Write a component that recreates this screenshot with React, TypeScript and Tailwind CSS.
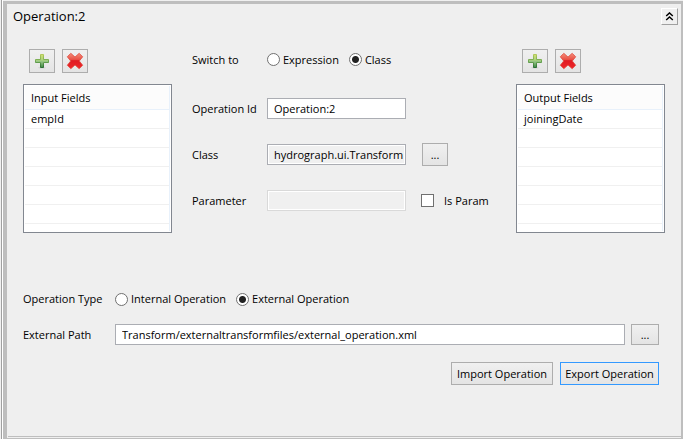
import React from "react";

function PlusIcon() {
  return (
    <svg width="16" height="16" viewBox="0 0 16 16" aria-hidden="true">
      <defs>
        <linearGradient id="plusFill" x1="0" y1="0" x2="0" y2="1">
          <stop offset="0" stopColor="#cfe070" />
          <stop offset="0.4" stopColor="#b0d47c" />
          <stop offset="0.55" stopColor="#93c383" />
          <stop offset="1" stopColor="#3f8a45" />
        </linearGradient>
        <linearGradient id="plusEdge" x1="0" y1="0" x2="0" y2="1">
          <stop offset="0" stopColor="#b3c95c" />
          <stop offset="0.5" stopColor="#6fa953" />
          <stop offset="1" stopColor="#2c6e35" />
        </linearGradient>
      </defs>
      <ellipse cx="8" cy="14.8" rx="4" ry="0.8" fill="#d2d2d2" />
      <path d="M6.5 1.5h3v5h5v3h-5v5h-3v-5h-5v-3h5z" fill="url(#plusFill)" stroke="url(#plusEdge)" strokeWidth="1" strokeLinejoin="round" />
    </svg>
  );
}

function CrossIcon() {
  return (
    <svg width="18" height="18" viewBox="0 0 18 18" aria-hidden="true">
      <defs>
        <linearGradient id="crossFill" x1="0" y1="0" x2="0" y2="1">
          <stop offset="0" stopColor="#f4907a" />
          <stop offset="0.4" stopColor="#ea5146" />
          <stop offset="0.48" stopColor="#e01b22" />
          <stop offset="1" stopColor="#ee2629" />
        </linearGradient>
      </defs>
      <path
        d="M4.8 1.3 9 5.1 13.2 1.3 16.7 4.8 13.3 9 16.7 13.2 13.2 16.7 9 13 4.8 16.7 1.3 13.2 4.7 9 1.3 4.8z"
        fill="url(#crossFill)"
        stroke="#e0493f"
        strokeWidth="0.8"
        strokeLinejoin="round"
      />
    </svg>
  );
}

const face = "border border-[#adadad] bg-linear-to-b from-[#f0f0f0] to-[#e4e4e4]";

function IconButton({ label, children }: { label: string; children: React.ReactNode }) {
  return (
    <button aria-label={label} className={`flex h-6 w-[26px] items-center justify-center ${face}`}>
      {children}
    </button>
  );
}

function FieldTable({ title, value }: { title: string; value: string }) {
  return (
    <div className="w-[149px] shrink-0">
      <div className="flex gap-[7px] pl-1.5">
        <IconButton label={`Add ${title}`}>
          <PlusIcon />
        </IconButton>
        <IconButton label={`Delete ${title}`}>
          <CrossIcon />
        </IconButton>
      </div>
      <div className="mt-[11px] h-[149px] border border-[#828790] bg-white p-px">
        <div className="h-full border-r border-[#e8f1fb]">
          <table className="w-full table-fixed border-separate border-spacing-0">
            <thead>
              <tr className="bg-[#fcfcfc]">
                <th className="h-6 border-b border-[#e8f1fb] p-0 pl-1.5 text-left font-normal">{title}</th>
              </tr>
            </thead>
            <tbody>
              {[value, "", "", "", "", ""].map((text, i) => (
                <tr key={i}>
                  <td className="h-[19px] border-b border-[#f0f0f0] p-0 pl-1.5">{text}</td>
                </tr>
              ))}
            </tbody>
          </table>
        </div>
      </div>
    </div>
  );
}

function Radio({ name, label, checked }: { name: string; label: string; checked?: boolean }) {
  return (
    <label className="flex items-center gap-[3px]">
      <input
        type="radio"
        name={name}
        defaultChecked={checked}
        className="size-[13px] appearance-none rounded-full border border-[#707070] bg-white checked:bg-[radial-gradient(circle,#222_0_3px,#fff_4px)]"
      />
      {label}
    </label>
  );
}

export default function App() {
  const box = "h-[21px] min-w-0 border pr-0.5 pl-1.5 outline-none";
  return (
    <div className="flex bg-[#f0f0f0] font-['Open_Sans','Noto_Sans',sans-serif] text-[11px] leading-4 text-black">
      <div className="w-px" />
      <div className="w-px bg-[#a0a0a0]" />
      <div className="w-px bg-white" />
      <main className="mt-px min-w-0 flex-1 border-t-[3px] border-r-2 border-b border-l-4 border-[#bebebe] bg-[#efefef] pb-px">
        <header className="flex justify-between pt-1 pr-[3px] pl-1.5">
          <h1 className="text-[13px] leading-4">Operation:2</h1>
          <button
            aria-label="Collapse"
            className="flex size-[17px] items-center justify-center border border-t-white border-r-[#a0a0a0] border-b-[#a0a0a0] border-l-white bg-[#f0f0f0]"
          >
            <svg width="9" height="9" viewBox="0 0 9 9" fill="none" stroke="#000" strokeWidth="1.4" aria-hidden="true">
              <path d="M1.2 4 4.5 0.9 7.8 4M1.2 8 4.5 4.9 7.8 8" />
            </svg>
          </button>
        </header>

        <div className="flex justify-between pt-6 pr-4 pl-4">
          <FieldTable title="Input Fields" value="empId" />
          <div className="w-[304px]">
            <div className="flex h-[21px] items-center">
              <span className="w-[75px]">Switch to</span>
              <div className="flex gap-2.5">
                <Radio name="mode" label="Expression" />
                <Radio name="mode" label="Class" checked />
              </div>
            </div>
            <div className="mt-7 grid grid-cols-[75px_139px_1fr] grid-rows-[21px_21px_21px] items-center gap-y-[25px]">
              <label htmlFor="opId">Operation Id</label>
              <input id="opId" className={`border-[#abadb3] bg-white ${box}`} defaultValue="Operation:2" />
              <span />
              <label htmlFor="cls">Class</label>
              <input
                id="cls"
                readOnly
                className={`border-[#abadb3] bg-[#f0f0f0] shadow-[inset_0_0_0_1px_#fff] ${box}`}
                defaultValue="hydrograph.ui.Transform"
              />
              <button className={`ml-4 h-[23px] w-[26px] ${face}`}>...</button>
              <label htmlFor="param">Parameter</label>
              <input id="param" disabled className={`border-[#d9d9d9] bg-[#f0f0f0] shadow-[inset_0_0_0_1px_#fff] ${box}`} />
              <label className="ml-[15px] flex items-center gap-2.5">
                <input type="checkbox" className="size-[13px] appearance-none border border-[#707070] bg-white" />
                Is Param
              </label>
            </div>
          </div>
          <FieldTable title="Output Fields" value="joiningDate" />
        </div>

        <div className="flex flex-col pt-[58px] pr-[22px] pb-[51px] pl-4">
          <div className="flex items-center">
            <span className="w-[92px]">Operation Type</span>
            <div className="flex gap-2.5">
              <Radio name="type" label="Internal Operation" />
              <Radio name="type" label="External Operation" checked />
            </div>
          </div>
          <div className="mt-[17px] flex items-center">
            <label htmlFor="path" className="w-[92px]">
              External Path
            </label>
            <input
              id="path"
              className={`flex-1 border-[#abadb3] bg-white ${box}`}
              defaultValue="Transform/externaltransformfiles/external_operation.xml"
            />
            <button className={`ml-1.5 h-[21px] w-7 ${face}`}>...</button>
          </div>
          <div className="mt-[17px] flex justify-end gap-[7px]">
            <button className={`h-[23px] w-[102px] whitespace-nowrap ${face}`}>Import Operation</button>
            <button className="h-[23px] w-[99px] border border-[#3399ff] bg-linear-to-b from-[#f0f0f0] to-[#e4e4e4] whitespace-nowrap">
              Export Operation
            </button>
          </div>
        </div>
        <div className="ml-px h-px bg-[#bebebe]" />
      </main>
    </div>
  );
}
